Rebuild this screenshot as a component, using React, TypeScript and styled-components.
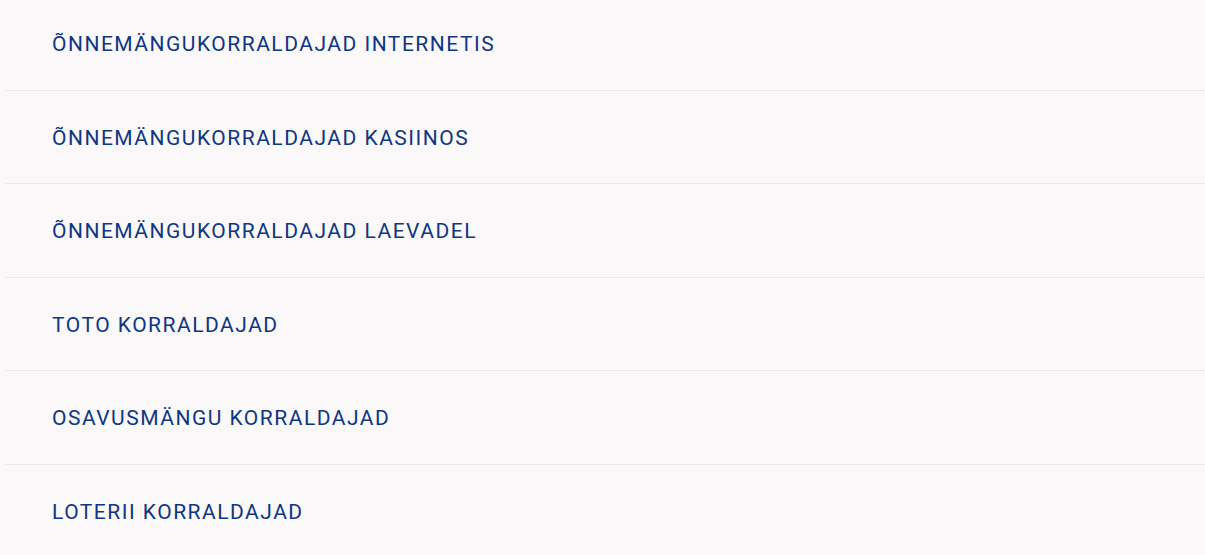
import styled, { createGlobalStyle } from 'styled-components';

const GlobalStyle = createGlobalStyle`
  html, body {
    margin: 0;
    padding: 0;
    background: #faf8f9;
  }
  body {
    font-family: Roboto, "Noto Sans", sans-serif;
  }
`;

const MenuList = styled.ul`
  list-style: none;
  margin: -3px 0 0;
  padding: 0 0 0 5px;
`;

const MenuItem = styled.li`
  display: flex;
  align-items: center;
  box-sizing: border-box;
  height: 93.5px;
  padding: 2px 0 0 47px;
  border-bottom: 1px solid #ebe9ea;
`;

const MenuLink = styled.a`
  color: #0e3683;
  font-size: 21px;
  font-weight: 400;
  letter-spacing: 1.5px;
  text-transform: uppercase;
  text-decoration: none;
  cursor: pointer;
`;

const items = [
  'Õnnemängukorraldajad internetis',
  'Õnnemängukorraldajad kasiinos',
  'Õnnemängukorraldajad laevadel',
  'Toto korraldajad',
  'Osavusmängu korraldajad',
  'Loterii korraldajad',
];

export default function App() {
  return (
    <>
      <GlobalStyle />
      <MenuList>
        {items.map((label) => (
          <MenuItem key={label}>
            <MenuLink>{label}</MenuLink>
          </MenuItem>
        ))}
      </MenuList>
    </>
  );
}
